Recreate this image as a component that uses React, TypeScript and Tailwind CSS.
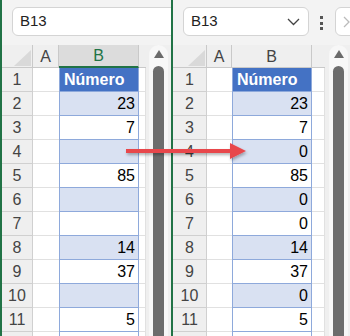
import React from "react";

const FONT = { fontFamily: '"Liberation Sans", Arial, sans-serif' };

type PanelProps = {
  values: string[];
  left: boolean;
};

function ColHeaderRow({ left, cornerW, aW, cW }: { left: boolean; cornerW: string; aW: string; cW: string }) {
  return (
    <div className="flex h-[23px] shrink-0">
      <div className={`relative ${cornerW} shrink-0 h-full bg-[#efefef] border-r border-b border-[#c9c9c9]`}>
        <svg className="absolute right-[1px] bottom-[1px]" width="17" height="16" viewBox="0 0 17 16">
          <polygon points="17,0 17,16 0,16" fill="#d9d9d9" />
        </svg>
      </div>
      <div className={`${aW} shrink-0 h-full bg-[#efefef] border-r border-b border-[#c9c9c9] flex items-center justify-center pt-[1px] text-[16px] text-[#444]`}>
        A
      </div>
      {left ? (
        <div className="w-[80px] shrink-0 h-full bg-[#dcdcdc] border-r border-[#c9c9c9] border-b-2 border-b-[#217346] flex items-center justify-center pt-[1px] text-[16px] text-[#217346]">
          B
        </div>
      ) : (
        <div className="w-[80px] shrink-0 h-full bg-[#efefef] border-r border-b border-[#c9c9c9] flex items-center justify-center pt-[1px] text-[16px] text-[#444]">
          B
        </div>
      )}
      <div className={`${cW} shrink-0 h-full bg-[#efefef] border-b border-[#c9c9c9]`} />
    </div>
  );
}

function Sheet({ values, left }: PanelProps) {
  const cornerW = left ? "w-[31px]" : "w-[34px]";
  const aW = left ? "w-[26px]" : "w-[25px]";
  const cW = left ? "w-[7px]" : "w-[13px]";
  const rows = Array.from({ length: 12 }, (_, i) => i + 1);
  return (
    <div className="flex flex-col overflow-hidden shrink-0">
      <ColHeaderRow left={left} cornerW={cornerW} aW={aW} cW={cW} />
      {rows.map((r) => {
        const v = values[r - 1] ?? "";
        const isHeader = r === 1;
        const banded = r % 2 === 0 && r <= 11;
        const bBg = isHeader ? "bg-[#4472c4]" : banded ? "bg-[#d9e1f2]" : "bg-white";
        return (
          <div key={r} className="flex h-[24px] shrink-0">
            <div className={`${cornerW} shrink-0 h-full bg-[#efefef] border-r border-b border-[#d0d0d0] flex items-center justify-center pt-[1px] text-[16px] text-[#444]`}>
              {r <= 11 ? r : ""}
            </div>
            <div className={`${aW} shrink-0 h-full bg-white border-b border-[#e1e1e1]`} />
            <div
              className={`w-[80px] shrink-0 h-full ${bBg} border-x border-b border-[#8ea9db] flex items-center pt-[1px] ${
                isHeader ? "justify-start pl-[4px]" : "justify-end pr-[3px]"
              }`}
            >
              {isHeader ? (
                <span className="text-[16px] font-bold text-white">{v}</span>
              ) : (
                <span className="text-[16px] text-black">{v}</span>
              )}
            </div>
            <div className={`${cW} shrink-0 h-full bg-white border-b border-r border-[#e1e1e1]`} />
          </div>
        );
      })}
    </div>
  );
}

function ScrollBar({ trackOffset }: { trackOffset: string }) {
  return (
    <div className="w-[25px] shrink-0 h-full bg-[#efefef] relative overflow-hidden">
      <div className={`absolute top-0 bottom-0 ${trackOffset} w-[19px] rounded-t-[10px] bg-[#f7f7f7] flex flex-col items-center`}>
        <svg className="mt-[5px]" width="10" height="8" viewBox="0 0 10 8">
          <polygon points="5,0 10,8 0,8" fill="#6a6a6a" />
        </svg>
        <div className="mt-[8px] w-[11px] flex-1 rounded-t-[6px] bg-[#6c6c6c]" />
      </div>
    </div>
  );
}

function LeftPanel() {
  const values = ["Número", "23", "7", "", "85", "", "", "14", "37", "", "5", ""];
  return (
    <div className="w-[171px] shrink-0 h-full border-l-2 border-[#217346] flex flex-col bg-[#f3f3f3] overflow-hidden">
      <div className="h-[45px] shrink-0 relative">
        <div className="absolute left-[10px] top-[7px] w-[200px] h-[29px] bg-white border border-[#d4d4d4] rounded-[6px] flex items-center pl-[7px] text-[15px] text-[#222]">
          B13
        </div>
      </div>
      <div className="flex flex-1 min-h-0">
        <Sheet values={values} left={true} />
        <ScrollBar trackOffset="left-[3px]" />
      </div>
    </div>
  );
}

function RightPanel() {
  const values = ["Número", "23", "7", "0", "85", "0", "0", "14", "37", "0", "5", ""];
  return (
    <div className="w-[177px] shrink-0 h-full flex flex-col bg-[#f3f3f3] overflow-hidden">
      <div className="h-[45px] shrink-0 flex items-start pt-[7px]">
        <div className="ml-[10px] w-[126px] shrink-0 h-[29px] bg-white border border-[#d4d4d4] rounded-[6px] flex items-center justify-between pl-[7px] pr-[8px] text-[15px] text-[#222]">
          <span>B13</span>
          <svg width="13" height="8" viewBox="0 0 13 8">
            <polyline points="1,1 6.5,6.5 12,1" fill="none" stroke="#444" strokeWidth="1.3" />
          </svg>
        </div>
        <div className="ml-[11px] mt-[9px] shrink-0 flex flex-col gap-[2.5px]">
          <div className="w-[3px] h-[3px] bg-[#555]" />
          <div className="w-[3px] h-[3px] bg-[#555]" />
          <div className="w-[3px] h-[3px] bg-[#555]" />
        </div>
        <div className="ml-[12px] w-[30px] h-[29px] shrink-0 bg-white border border-[#d4d4d4] rounded-[6px] flex items-center pl-[7px]">
          <svg width="7" height="12" viewBox="0 0 7 12">
            <polyline points="1,1 6,6 1,11" fill="none" stroke="#bbb" strokeWidth="1.3" />
          </svg>
        </div>
      </div>
      <div className="flex flex-1 min-h-0">
        <Sheet values={values} left={false} />
        <ScrollBar trackOffset="left-[4px]" />
      </div>
    </div>
  );
}

export default function App() {
  return (
    <div className="relative w-[350px] h-[336px] flex overflow-hidden bg-[#f3f3f3]" style={FONT}>
      <LeftPanel />
      <div className="w-[2px] shrink-0 h-full bg-[#217346]" />
      <RightPanel />
      <svg className="absolute left-0 top-0 pointer-events-none" width="350" height="336" viewBox="0 0 350 336">
        <defs>
          <filter id="sh" x="-10%" y="-50%" width="120%" height="200%">
            <feDropShadow dx="1" dy="2" stdDeviation="1.5" floodColor="#000" floodOpacity="0.3" />
          </filter>
        </defs>
        <g filter="url(#sh)">
          <rect x="126" y="149" width="106" height="4" fill="#e8474c" />
          <polygon points="230,143 246,151 230,159" fill="#e8474c" />
        </g>
      </svg>
    </div>
  );
}
